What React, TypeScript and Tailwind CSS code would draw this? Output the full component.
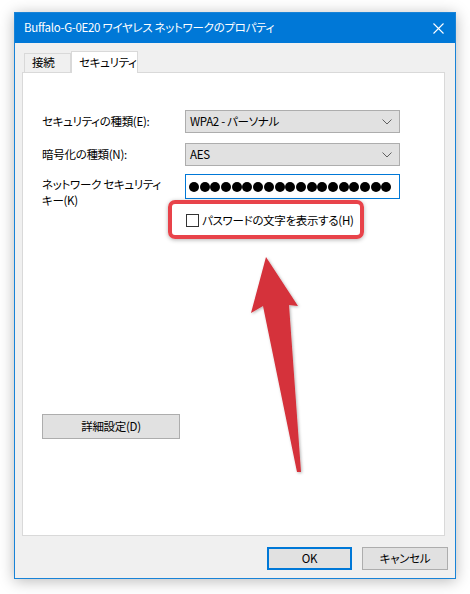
import React from "react";

const font = {
  fontFamily: '"Noto Sans CJK JP", "Open Sans", sans-serif',
  fontFeatureSettings: '"palt"',
};

function Chevron() {
  return (
    <svg width="10" height="6" viewBox="0 0 10 6" className="text-[#606060]">
      <polyline points="0.5,0.5 5,5 9.5,0.5" fill="none" stroke="currentColor" strokeWidth="1" />
    </svg>
  );
}

function Combo({ value }: { value: string }) {
  return (
    <div className="flex h-[23px] w-[215px] items-center justify-between border border-[#adadad] bg-[#e1e1e1] pl-[4px] pr-[7px]">
      <span className="whitespace-nowrap">{value}</span>
      <Chevron />
    </div>
  );
}

export default function App() {
  return (
    <div
      className="relative h-[594px] w-[470px] overflow-hidden bg-white text-[11.5px] tracking-[-0.3px] text-black"
      style={font}
    >
      <div className="ml-[14px] mt-[12px] flex h-[567px] w-[442px] flex-col border border-[#1883d7] bg-[#f0f0f0] shadow-[0_2px_14px_rgba(0,0,0,0.28)]">
        {/* title bar */}
        <div className="flex h-[30px] items-center justify-between bg-[#0078d7] pl-[9px] pr-[11px]">
          <span className="whitespace-nowrap text-white">Buffalo-G-0E20 ワイヤレス ネットワークのプロパティ</span>
          <svg width="11" height="11" viewBox="0 0 11 11">
            <path d="M0.5 0.5 L10.5 10.5 M10.5 0.5 L0.5 10.5" stroke="white" strokeWidth="1.1" />
          </svg>
        </div>

        {/* tabs */}
        <div className="mt-[8px] flex pl-[9px]">
          <div className="mt-[2px] flex h-[19px] w-[47px] items-center whitespace-nowrap border border-b-0 border-[#d9d9d9] bg-[#f0f0f0] pl-[7px]">
            接続
          </div>
          <div className="relative z-10 -mb-px flex h-[22px] w-[67px] items-center whitespace-nowrap border border-b-0 border-[#d9d9d9] bg-white pl-[7px]">
            セキュリティ
          </div>
        </div>

        {/* panel */}
        <div className="ml-[7px] flex h-[464px] w-[423px] flex-col border border-[#d9d9d9] bg-white pl-[19px] pt-[37px]">
          <div className="flex items-center">
            <span className="w-[143px] whitespace-nowrap">セキュリティの種類(E):</span>
            <Combo value="WPA2 - パーソナル" />
          </div>
          <div className="mt-[10px] flex items-center">
            <span className="w-[143px] whitespace-nowrap">暗号化の種類(N):</span>
            <Combo value="AES" />
          </div>
          <div className="mt-[8px] flex items-start">
            <span className="w-[143px] whitespace-nowrap pt-[2px] leading-[16px]">
              ネットワーク セキュリティ
              <br />
              キー(K)
            </span>
            <div className="flex h-[25px] w-[215px] items-center gap-[0.7px] border border-[#0078d7] bg-white pl-[3px]">
              {Array.from({ length: 19 }).map((_, i) => (
                <span key={i} className="h-[10px] w-[10px] shrink-0 rounded-full bg-black" />
              ))}
            </div>
          </div>
          <div className="ml-[144px] mt-[4px] flex items-center gap-[3px]">
            <span className="h-[13px] w-[13px] border border-[#333333] bg-white" />
            <span className="whitespace-nowrap">パスワードの文字を表示する(H)</span>
          </div>

          <div className="mt-[185px] flex h-[25px] w-[138px] items-center justify-center whitespace-nowrap border border-[#adadad] bg-[#e1e1e1]">
            詳細設定(D)
          </div>
        </div>

        {/* buttons */}
        <div className="mt-[11px] flex justify-end gap-[10px] pr-[7px]">
          <div className="flex h-[23px] w-[85px] items-center justify-center border-2 border-[#0078d7] bg-[#e1e1e1]">
            OK
          </div>
          <div className="flex h-[23px] w-[86px] items-center justify-center whitespace-nowrap border border-[#adadad] bg-[#e1e1e1]">
            キャンセル
          </div>
        </div>
      </div>

      {/* annotation: highlight box */}
      <div className="absolute left-[168px] top-[200px] h-[39px] w-[196px] rounded-[7px] border-[4px] border-[#e8434a] shadow-[0_1px_4px_rgba(0,0,0,0.3)]" />

      {/* annotation: arrow */}
      <svg className="absolute left-0 top-0" width="470" height="594" viewBox="0 0 470 594">
        <defs>
          <filter id="sh" x="-50%" y="-10%" width="200%" height="130%">
            <feDropShadow dx="1" dy="1" stdDeviation="1.5" floodColor="#000" floodOpacity="0.3" />
          </filter>
        </defs>
        <path
          d="M266 257 L298 306 L289 305 L301 472 L297 472 L263 306 L251 313 Z"
          fill="#d5303a"
          filter="url(#sh)"
        />
      </svg>
    </div>
  );
}
